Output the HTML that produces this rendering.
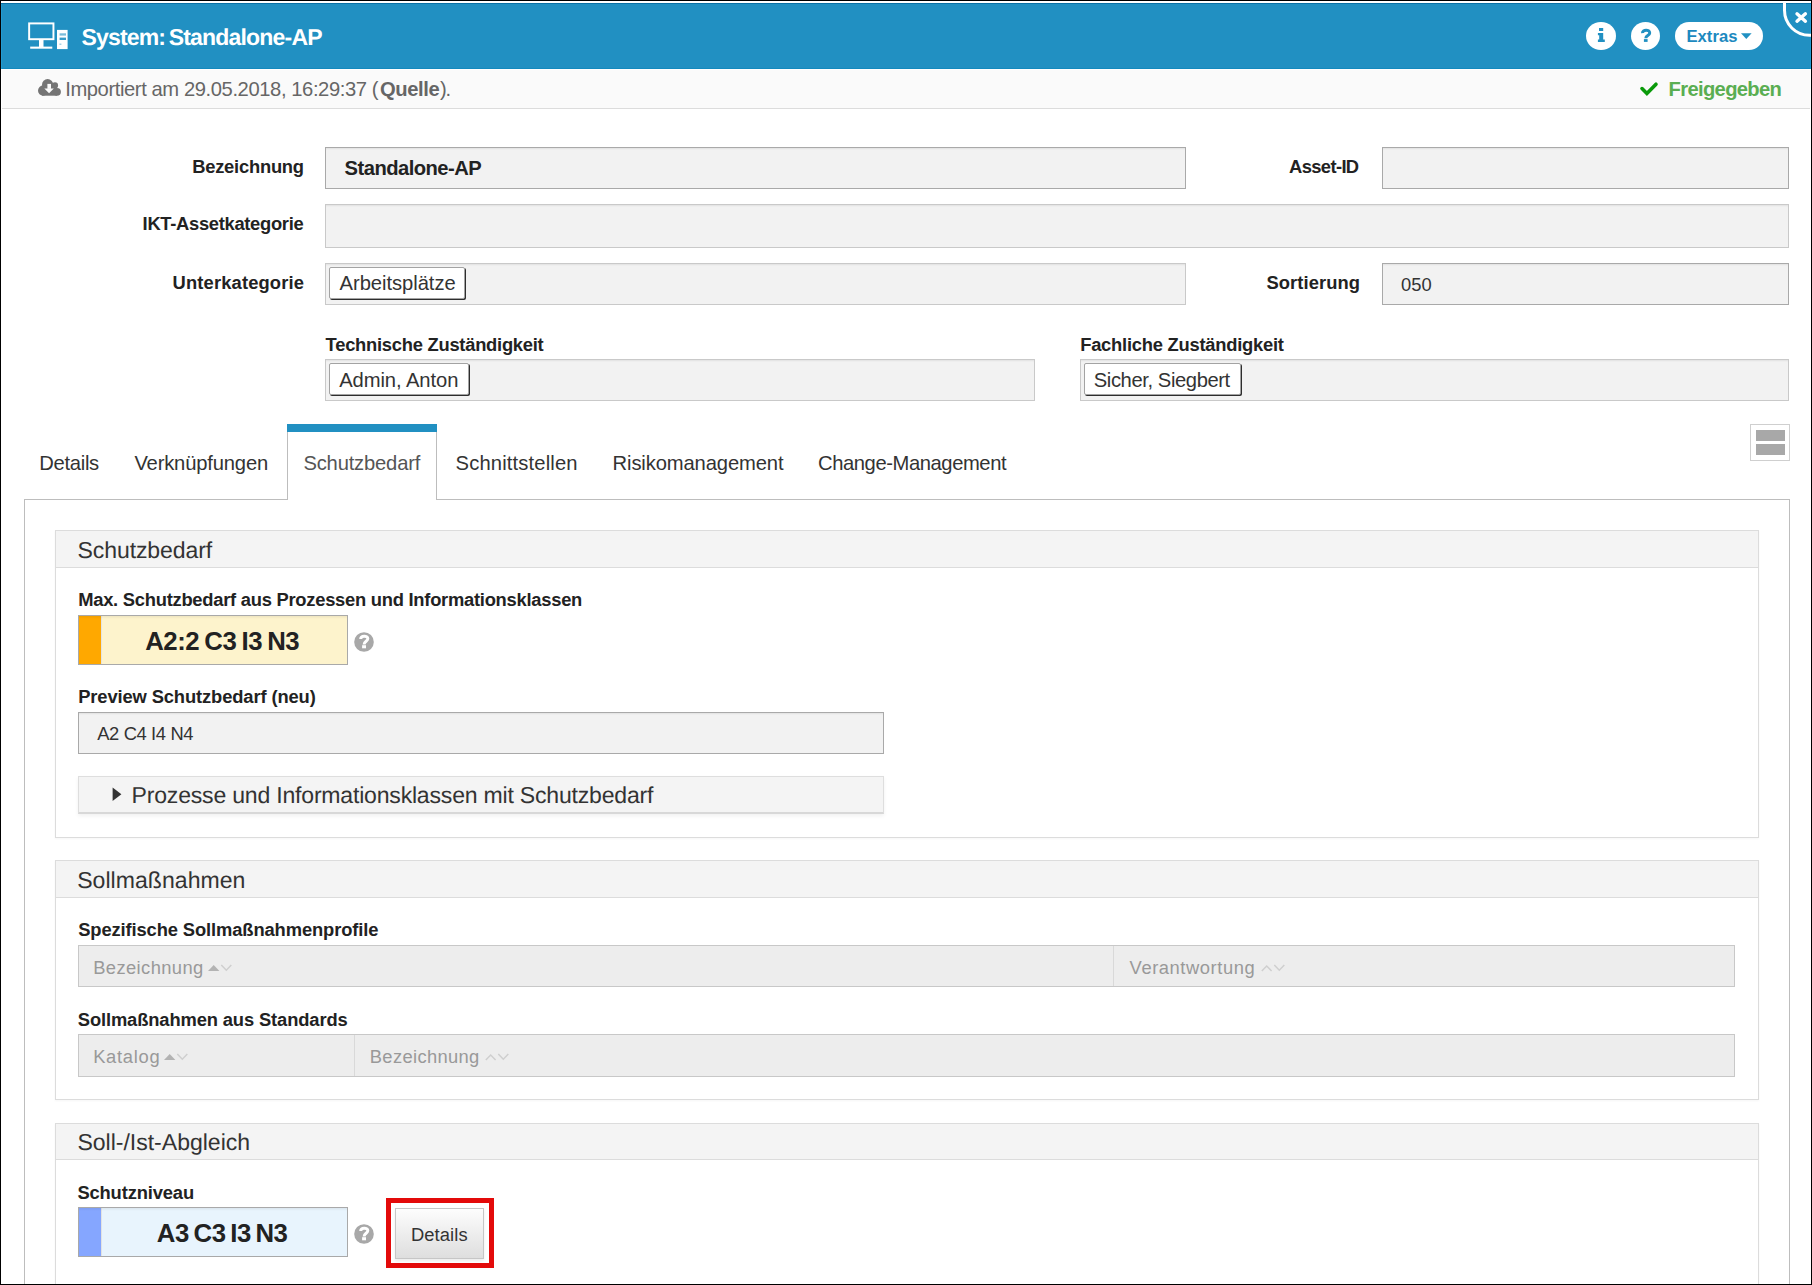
<!DOCTYPE html>
<html><head><meta charset="utf-8"><style>
html,body{margin:0;padding:0;}
body{width:1812px;height:1285px;position:relative;overflow:hidden;background:#fff;font-family:"Liberation Sans", sans-serif;}
.r{position:absolute;box-sizing:border-box;}
.t{position:absolute;white-space:nowrap;line-height:normal;font-family:"Liberation Sans", sans-serif;}
</style></head><body>
<div class="r" style="left:0px;top:0px;width:1812px;height:1285px;background:#000"></div>
<div class="r" style="left:1px;top:1px;width:1810px;height:1283px;background:#fff"></div>
<div class="r" style="left:1px;top:3px;width:1810px;height:1px;background:#0a72a6"></div>
<div class="r" style="left:1px;top:4px;width:1810px;height:64px;background:#2190c2"></div>
<div class="r" style="left:1px;top:68px;width:1810px;height:1px;background:#1389be"></div>
<div class="r" style="left:1px;top:4px;width:1px;height:65px;background:#239bd1"></div>
<div class="r" style="left:1810px;top:4px;width:1px;height:65px;background:#239bd1"></div>
<div class="r" style="left:2px;top:70px;width:1808px;height:38px;background:#fafafa"></div>
<div class="r" style="left:2px;top:108px;width:1808px;height:1px;background:#dcdcdc"></div>
<svg class="r" style="left:26px;top:20px" width="46" height="32" viewBox="26 20 46 32">
<rect x="29.15" y="23.4" width="24.3" height="15.8" fill="none" stroke="#fff" stroke-width="1.95"/>
<rect x="39" y="40" width="4.5" height="7" fill="#fff"/>
<rect x="30.2" y="46.6" width="22.1" height="2.1" fill="#fff"/>
<rect x="57" y="29.9" width="10.6" height="19.2" fill="#fff"/>
<rect x="59.6" y="33.3" width="6.4" height="2.3" fill="#2190c2" opacity="0.6"/>
<rect x="59.6" y="37.6" width="6.4" height="2.4" fill="#2190c2" opacity="0.9"/>
<rect x="59.4" y="43.6" width="2" height="1.2" fill="#2190c2" opacity="0.5"/>
</svg>
<div class="r" style="left:1586px;top:22px;width:30px;height:28px;border-radius:50%;background:#fff"></div>
<div class="r" style="left:1631px;top:22px;width:29px;height:28px;border-radius:50%;background:#fff"></div>
<div class="r" style="left:1675px;top:22px;width:88px;height:28px;border-radius:14px;background:#fff"></div>
<svg class="r" style="left:1590px;top:24px" width="22" height="24" viewBox="1590 24 22 24"><path d="M1599 28 h4.2 v2.9 h-4.2z M1597.9 33 h5.3 v6.6 h1.6 v2.3 h-6.9 v-2.3 h1.3 v-4.3 h-1.3z" fill="#2190c2"/></svg>
<svg class="r" style="left:1636px;top:24px" width="20" height="24" viewBox="1636 24 20 24"><path d="M1642.5 33.2 C1642.3 29.4 1649.7 29.2 1649.7 32.9 C1649.7 35.6 1645.8 35.4 1645.8 38.2" fill="none" stroke="#2190c2" stroke-width="3"/><rect x="1643.9" y="39.1" width="3.7" height="2.8" fill="#2190c2"/></svg>
<svg class="r" style="left:1740px;top:32px" width="13" height="8" viewBox="0 0 13 8"><path d="M1 1.2 H11.6 L6.3 6.9 Z" fill="#2190c2"/></svg>
<svg class="r" style="left:1770px;top:3px" width="41" height="45" viewBox="1770 3 41 45"><path d="M1784.5 3 V10.3 A25 25 0 0 0 1809.5 35.3 H1812" fill="none" stroke="#fff" stroke-width="3"/><path d="M1797 13.8 L1805.4 21.2 M1805.4 13.8 L1797 21.2" stroke="#fff" stroke-width="3.4" stroke-linecap="round"/></svg>
<svg class="r" style="left:34px;top:74px" width="32" height="26" viewBox="34 74 32 26"><g fill="#747474"><circle cx="47.6" cy="84.7" r="5.6"/><circle cx="55" cy="85.4" r="3.1"/><circle cx="43.1" cy="90.6" r="5.1"/><circle cx="57" cy="91.8" r="3.9"/><rect x="42" y="85.5" width="15" height="10.2"/><rect x="47" y="84" width="9" height="6"/></g><g fill="#fafafa"><rect x="47.4" y="83.9" width="3.6" height="5"/><path d="M44.3 88.6 H53.8 L49.05 93.3z"/></g></svg>
<svg class="r" style="left:1638px;top:80px" width="22" height="18" viewBox="1638 80 22 18"><path d="M1642 88.6 L1646.9 93.5 L1656 84.2" fill="none" stroke="#0a9a0a" stroke-width="3.6" stroke-linecap="round" stroke-linejoin="miter"/></svg>
<div class="r" style="left:325px;top:147px;width:861px;height:42px;background:#f2f2f2;border:1px solid #a9a9a9;box-shadow:inset 0 2px 2px -1px rgba(0,0,0,0.07)"></div>
<div class="r" style="left:1382px;top:147px;width:407px;height:42px;background:#f2f2f2;border:1px solid #a9a9a9;box-shadow:inset 0 2px 2px -1px rgba(0,0,0,0.07)"></div>
<div class="r" style="left:325px;top:204px;width:1464px;height:44px;background:#f2f2f2;border:1px solid #c9c9c9;box-shadow:inset 0 2px 2px -1px rgba(0,0,0,0.07)"></div>
<div class="r" style="left:325px;top:263px;width:861px;height:42px;background:#f2f2f2;border:1px solid #c9c9c9;box-shadow:inset 0 2px 2px -1px rgba(0,0,0,0.07)"></div>
<div class="r" style="left:329px;top:267px;width:136px;height:32px;background:#fff;border:1px solid #a3a3a3;border-radius:2px;box-shadow:1px 1px 0 #2e2e2e"></div>
<div class="r" style="left:1382px;top:263px;width:407px;height:42px;background:#f2f2f2;border:1px solid #a9a9a9;box-shadow:inset 0 2px 2px -1px rgba(0,0,0,0.07)"></div>
<div class="r" style="left:325px;top:359px;width:710px;height:42px;background:#f2f2f2;border:1px solid #c9c9c9;box-shadow:inset 0 2px 2px -1px rgba(0,0,0,0.07)"></div>
<div class="r" style="left:329px;top:363px;width:140px;height:32px;background:#fff;border:1px solid #a3a3a3;border-radius:2px;box-shadow:1px 1px 0 #2e2e2e"></div>
<div class="r" style="left:1080px;top:359px;width:709px;height:42px;background:#f2f2f2;border:1px solid #c9c9c9;box-shadow:inset 0 2px 2px -1px rgba(0,0,0,0.07)"></div>
<div class="r" style="left:1084px;top:363px;width:157px;height:32px;background:#fff;border:1px solid #a3a3a3;border-radius:2px;box-shadow:1px 1px 0 #2e2e2e"></div>
<div class="r" style="left:24px;top:499px;width:264px;height:1px;background:#bdbdbd"></div>
<div class="r" style="left:436px;top:499px;width:1354px;height:1px;background:#bdbdbd"></div>
<div class="r" style="left:24px;top:499px;width:1px;height:785px;background:#bdbdbd"></div>
<div class="r" style="left:1789px;top:499px;width:1px;height:785px;background:#bdbdbd"></div>
<div class="r" style="left:287px;top:424px;width:1px;height:76px;background:#bdbdbd"></div>
<div class="r" style="left:436px;top:424px;width:1px;height:76px;background:#bdbdbd"></div>
<div class="r" style="left:287px;top:424px;width:150px;height:8px;background:#2190c2"></div>
<div class="r" style="left:1750px;top:424px;width:40px;height:37px;border:1px solid #cfcfcf;background:#fff"></div>
<div class="r" style="left:1756px;top:430px;width:29px;height:11px;background:#a8a8a8"></div>
<div class="r" style="left:1756px;top:444px;width:29px;height:11px;background:#a8a8a8"></div>
<div class="r" style="left:55px;top:530px;width:1704px;height:308px;border:1px solid #dcdcdc;background:#fff;box-shadow:0 1px 2px rgba(0,0,0,0.04)"></div><div class="r" style="left:56px;top:531px;width:1702px;height:36px;background:#f4f4f4"></div><div class="r" style="left:56px;top:567px;width:1702px;height:1px;background:#dcdcdc"></div>
<div class="r" style="left:55px;top:860px;width:1704px;height:240px;border:1px solid #dcdcdc;background:#fff;box-shadow:0 1px 2px rgba(0,0,0,0.04)"></div><div class="r" style="left:56px;top:861px;width:1702px;height:36px;background:#f4f4f4"></div><div class="r" style="left:56px;top:897px;width:1702px;height:1px;background:#dcdcdc"></div>
<div class="r" style="left:55px;top:1123px;width:1704px;height:168px;border:1px solid #dcdcdc;background:#fff;box-shadow:0 1px 2px rgba(0,0,0,0.04)"></div><div class="r" style="left:56px;top:1124px;width:1702px;height:35px;background:#f4f4f4"></div><div class="r" style="left:56px;top:1159px;width:1702px;height:1px;background:#dcdcdc"></div>
<div class="r" style="left:78px;top:615px;width:270px;height:50px;border:1px solid #a9a9a9;background:#fdf3cc"></div><div class="r" style="left:79px;top:616px;width:22px;height:48px;background:#ffa800"></div><div class="r" style="left:101px;top:616px;width:1px;height:48px;background:#e2e2e2"></div><div class="r" style="left:79px;top:616px;width:268px;height:3px;background:linear-gradient(rgba(0,0,0,0.06),rgba(0,0,0,0))"></div>
<div class="r" style="left:78px;top:1207px;width:270px;height:50px;border:1px solid #a9a9a9;background:#e8f4fd"></div><div class="r" style="left:79px;top:1208px;width:22px;height:48px;background:#85a6ff"></div><div class="r" style="left:101px;top:1208px;width:1px;height:48px;background:#e2e2e2"></div><div class="r" style="left:79px;top:1208px;width:268px;height:3px;background:linear-gradient(rgba(0,0,0,0.06),rgba(0,0,0,0))"></div>
<svg class="r" style="left:352.8px;top:630.7px" width="22" height="22" viewBox="352.8 630.7 22 22"><circle cx="363.8" cy="641.7" r="9.8" fill="#a8a8a8"/><path d="M360.5 638.8000000000001 C360.5 635.1 367.6 635.1 367.6 638.3000000000001 C367.6 641.1 363.90000000000003 640.8000000000001 363.90000000000003 644.3000000000001" fill="none" stroke="#fff" stroke-width="3"/><rect x="361.90000000000003" y="644.9000000000001" width="3.9" height="3.1" fill="#fff"/></svg>
<svg class="r" style="left:352.85px;top:1222.8px" width="22" height="22" viewBox="352.85 1222.8 22 22"><circle cx="363.85" cy="1233.8" r="9.8" fill="#a8a8a8"/><path d="M360.55 1230.8999999999999 C360.55 1227.2 367.65000000000003 1227.2 367.65000000000003 1230.3999999999999 C367.65000000000003 1233.2 363.95000000000005 1232.8999999999999 363.95000000000005 1236.3999999999999" fill="none" stroke="#fff" stroke-width="3"/><rect x="361.95000000000005" y="1237.0" width="3.9" height="3.1" fill="#fff"/></svg>
<div class="r" style="left:78px;top:712px;width:806px;height:42px;background:#f2f2f2;border:1px solid #a9a9a9;box-shadow:inset 0 2px 2px -1px rgba(0,0,0,0.07)"></div>
<div class="r" style="left:78px;top:776px;width:806px;height:38px;background:#f4f4f4;border:1px solid #dedede;border-bottom:2px solid #d8d8d8;box-shadow:0 2px 4px rgba(0,0,0,0.06)"></div>
<svg class="r" style="left:110px;top:785px" width="14" height="18" viewBox="110 785 14 18"><path d="M112.6 787.5 L121.4 794.2 L112.6 801z" fill="#333"/></svg>
<div class="r" style="left:78px;top:945px;width:1657px;height:42px;background:#ededed;border:1px solid #c8c8c8"></div><div class="r" style="left:1113px;top:946px;width:1px;height:40px;background:#d9d9d9"></div>
<div class="r" style="left:78px;top:1034px;width:1657px;height:43px;background:#ededed;border:1px solid #c8c8c8"></div><div class="r" style="left:354px;top:1035px;width:1px;height:41px;background:#d9d9d9"></div>
<svg class="r" style="left:205.5px;top:962.8px" width="30" height="11" viewBox="205.5 962.8 30 11"><path d="M207.5 970.8 L213.2 964.8 L218.9 970.8z" fill="#b3b3b3"/><path d="M220.8 964.8 L225.8 970.0 L230.8 964.8" fill="none" stroke="#cfcfcf" stroke-width="1.5"/></svg>
<svg class="r" style="left:1259px;top:962.8px" width="30" height="11" viewBox="1259 962.8 30 11"><path d="M1261.8 970.8 L1266.7 965.8 L1271.6 970.8" fill="none" stroke="#cfcfcf" stroke-width="1.5"/><path d="M1274.3 964.8 L1279.3 970.0 L1284.3 964.8" fill="none" stroke="#cfcfcf" stroke-width="1.5"/></svg>
<svg class="r" style="left:162.4px;top:1051.6px" width="30" height="11" viewBox="162.4 1051.6 30 11"><path d="M164.4 1059.6 L170.1 1053.6 L175.8 1059.6z" fill="#b3b3b3"/><path d="M177.70000000000002 1053.6 L182.70000000000002 1058.8 L187.70000000000002 1053.6" fill="none" stroke="#cfcfcf" stroke-width="1.5"/></svg>
<svg class="r" style="left:482.7px;top:1051.6px" width="30" height="11" viewBox="482.7 1051.6 30 11"><path d="M485.5 1059.6 L490.4 1054.6 L495.3 1059.6" fill="none" stroke="#cfcfcf" stroke-width="1.5"/><path d="M498.0 1053.6 L503.0 1058.8 L508.0 1053.6" fill="none" stroke="#cfcfcf" stroke-width="1.5"/></svg>
<div class="r" style="left:386px;top:1198px;width:108px;height:70px;border:5px solid #e30a0a"></div>
<div class="r" style="left:395px;top:1208px;width:89px;height:51px;border:1px solid #c6c6c6;background:linear-gradient(#fdfdfd,#dedede);box-shadow:0 2px 3px rgba(0,0,0,0.08)"></div>
<div class="t" style="text-rendering:geometricPrecision;left:81.40px;top:24.13px;font-size:23.06px;letter-spacing:-0.836px;word-spacing:-2.075px;color:#fff;font-weight:700">System: Standalone-AP</div>
<div class="t" style="left:65.20px;top:77.72px;font-size:20.20px;letter-spacing:-0.411px;word-spacing:0.000px;color:#666;font-weight:400">Importiert am 29.05.2018, 16:29:37 (</div>
<div class="t" style="left:380.00px;top:77.72px;font-size:20.20px;letter-spacing:-0.420px;word-spacing:0.000px;color:#666;font-weight:700">Quelle</div>
<div class="t" style="left:440.00px;top:77.72px;font-size:20.20px;letter-spacing:-1.200px;word-spacing:0.000px;color:#666;font-weight:400">).</div>
<div class="t" style="left:1686.40px;top:26.94px;font-size:16.64px;letter-spacing:0.060px;word-spacing:0.000px;color:#1c89bf;font-weight:700">Extras</div>
<div class="t" style="left:1668.60px;top:77.72px;font-size:20.20px;letter-spacing:-0.670px;word-spacing:0.000px;color:#5aae52;font-weight:700">Freigegeben</div>
<div class="t" style="left:192.20px;top:156.39px;font-size:18.35px;letter-spacing:-0.230px;word-spacing:0.000px;color:#222;font-weight:700">Bezeichnung</div>
<div class="t" style="left:344.60px;top:156.72px;font-size:20.20px;letter-spacing:-0.533px;word-spacing:0.000px;color:#222;font-weight:700">Standalone-AP</div>
<div class="t" style="left:142.60px;top:213.39px;font-size:18.35px;letter-spacing:-0.300px;word-spacing:0.000px;color:#222;font-weight:700">IKT-Assetkategorie</div>
<div class="t" style="left:172.60px;top:272.39px;font-size:18.35px;letter-spacing:0.146px;word-spacing:0.000px;color:#222;font-weight:700">Unterkategorie</div>
<div class="t" style="left:339.60px;top:271.72px;font-size:20.20px;letter-spacing:-0.050px;word-spacing:0.000px;color:#333;font-weight:400">Arbeitsplätze</div>
<div class="t" style="left:1289.00px;top:156.39px;font-size:18.35px;letter-spacing:-0.614px;word-spacing:0.000px;color:#222;font-weight:700">Asset-ID</div>
<div class="t" style="left:1266.40px;top:272.39px;font-size:18.35px;letter-spacing:0.100px;word-spacing:0.000px;color:#222;font-weight:700">Sortierung</div>
<div class="t" style="left:1401.00px;top:274.39px;font-size:18.35px;letter-spacing:0.050px;word-spacing:0.000px;color:#333;font-weight:400">050</div>
<div class="t" style="left:325.60px;top:334.39px;font-size:18.35px;letter-spacing:-0.252px;word-spacing:0.000px;color:#222;font-weight:700">Technische Zuständigkeit</div>
<div class="t" style="left:1080.20px;top:334.39px;font-size:18.35px;letter-spacing:-0.236px;word-spacing:0.000px;color:#222;font-weight:700">Fachliche Zuständigkeit</div>
<div class="t" style="left:339.20px;top:368.72px;font-size:20.20px;letter-spacing:-0.082px;word-spacing:0.000px;color:#333;font-weight:400">Admin, Anton</div>
<div class="t" style="left:1093.80px;top:368.72px;font-size:20.20px;letter-spacing:-0.407px;word-spacing:0.000px;color:#333;font-weight:400">Sicher, Siegbert</div>
<div class="t" style="left:39.20px;top:451.72px;font-size:20.20px;letter-spacing:-0.283px;word-spacing:0.000px;color:#333;font-weight:400">Details</div>
<div class="t" style="left:134.40px;top:451.72px;font-size:20.20px;letter-spacing:-0.167px;word-spacing:0.000px;color:#333;font-weight:400">Verknüpfungen</div>
<div class="t" style="left:303.40px;top:451.72px;font-size:20.20px;letter-spacing:-0.182px;word-spacing:0.000px;color:#555;font-weight:400">Schutzbedarf</div>
<div class="t" style="left:455.60px;top:451.72px;font-size:20.20px;letter-spacing:0.146px;word-spacing:0.000px;color:#333;font-weight:400">Schnittstellen</div>
<div class="t" style="left:612.60px;top:451.72px;font-size:20.20px;letter-spacing:-0.127px;word-spacing:0.000px;color:#333;font-weight:400">Risikomanagement</div>
<div class="t" style="left:818.00px;top:451.72px;font-size:20.20px;letter-spacing:-0.419px;word-spacing:0.000px;color:#333;font-weight:400">Change-Management</div>
<div class="t" style="text-rendering:geometricPrecision;left:77.60px;top:537.13px;font-size:23.06px;letter-spacing:-0.118px;word-spacing:0.000px;color:#333;font-weight:400">Schutzbedarf</div>
<div class="t" style="left:78.20px;top:589.39px;font-size:18.35px;letter-spacing:-0.254px;word-spacing:0.000px;color:#222;font-weight:700">Max. Schutzbedarf aus Prozessen und Informationsklassen</div>
<div class="t" style="left:145.20px;top:626.69px;font-size:25.76px;letter-spacing:-0.450px;word-spacing:-1.567px;color:#222;font-weight:700">A2:2 C3 I3 N3</div>
<div class="t" style="left:78.20px;top:686.39px;font-size:18.35px;letter-spacing:-0.120px;word-spacing:0.000px;color:#222;font-weight:700">Preview Schutzbedarf (neu)</div>
<div class="t" style="left:97.20px;top:723.39px;font-size:18.35px;letter-spacing:-0.360px;word-spacing:0.000px;color:#333;font-weight:400">A2 C4 I4 N4</div>
<div class="t" style="text-rendering:geometricPrecision;left:131.60px;top:782.13px;font-size:23.06px;letter-spacing:-0.204px;word-spacing:0.000px;color:#333;font-weight:400">Prozesse und Informationsklassen mit Schutzbedarf</div>
<div class="t" style="text-rendering:geometricPrecision;left:77.20px;top:867.13px;font-size:23.06px;letter-spacing:0.033px;word-spacing:0.000px;color:#333;font-weight:400">Sollmaßnahmen</div>
<div class="t" style="left:78.20px;top:919.39px;font-size:18.35px;letter-spacing:-0.113px;word-spacing:0.000px;color:#222;font-weight:700">Spezifische Sollmaßnahmenprofile</div>
<div class="t" style="left:93.20px;top:957.39px;font-size:18.35px;letter-spacing:0.400px;word-spacing:0.000px;color:#999;font-weight:400">Bezeichnung</div>
<div class="t" style="left:1129.60px;top:957.39px;font-size:18.35px;letter-spacing:0.567px;word-spacing:0.000px;color:#999;font-weight:400">Verantwortung</div>
<div class="t" style="left:77.80px;top:1009.39px;font-size:18.35px;letter-spacing:-0.127px;word-spacing:0.000px;color:#222;font-weight:700">Sollmaßnahmen aus Standards</div>
<div class="t" style="left:93.20px;top:1046.39px;font-size:18.35px;letter-spacing:0.700px;word-spacing:0.000px;color:#999;font-weight:400">Katalog</div>
<div class="t" style="left:369.80px;top:1046.39px;font-size:18.35px;letter-spacing:0.340px;word-spacing:0.000px;color:#999;font-weight:400">Bezeichnung</div>
<div class="t" style="text-rendering:geometricPrecision;left:77.40px;top:1129.13px;font-size:23.06px;letter-spacing:-0.012px;word-spacing:0.000px;color:#333;font-weight:400">Soll-/Ist-Abgleich</div>
<div class="t" style="left:77.40px;top:1182.39px;font-size:18.35px;letter-spacing:-0.136px;word-spacing:0.000px;color:#222;font-weight:700">Schutzniveau</div>
<div class="t" style="left:156.80px;top:1218.69px;font-size:25.76px;letter-spacing:-0.450px;word-spacing:-2.033px;color:#222;font-weight:700">A3 C3 I3 N3</div>
<div class="t" style="left:411.00px;top:1224.39px;font-size:18.35px;letter-spacing:0.083px;word-spacing:0.000px;color:#333;font-weight:400">Details</div>
<div class="r" style="left:0px;top:0px;width:1812px;height:1px;background:#000"></div>
<div class="r" style="left:0px;top:1284px;width:1812px;height:1px;background:#000"></div>
<div class="r" style="left:0px;top:0px;width:1px;height:1285px;background:#000"></div>
<div class="r" style="left:1811px;top:0px;width:1px;height:1285px;background:#000"></div>
</body></html>
